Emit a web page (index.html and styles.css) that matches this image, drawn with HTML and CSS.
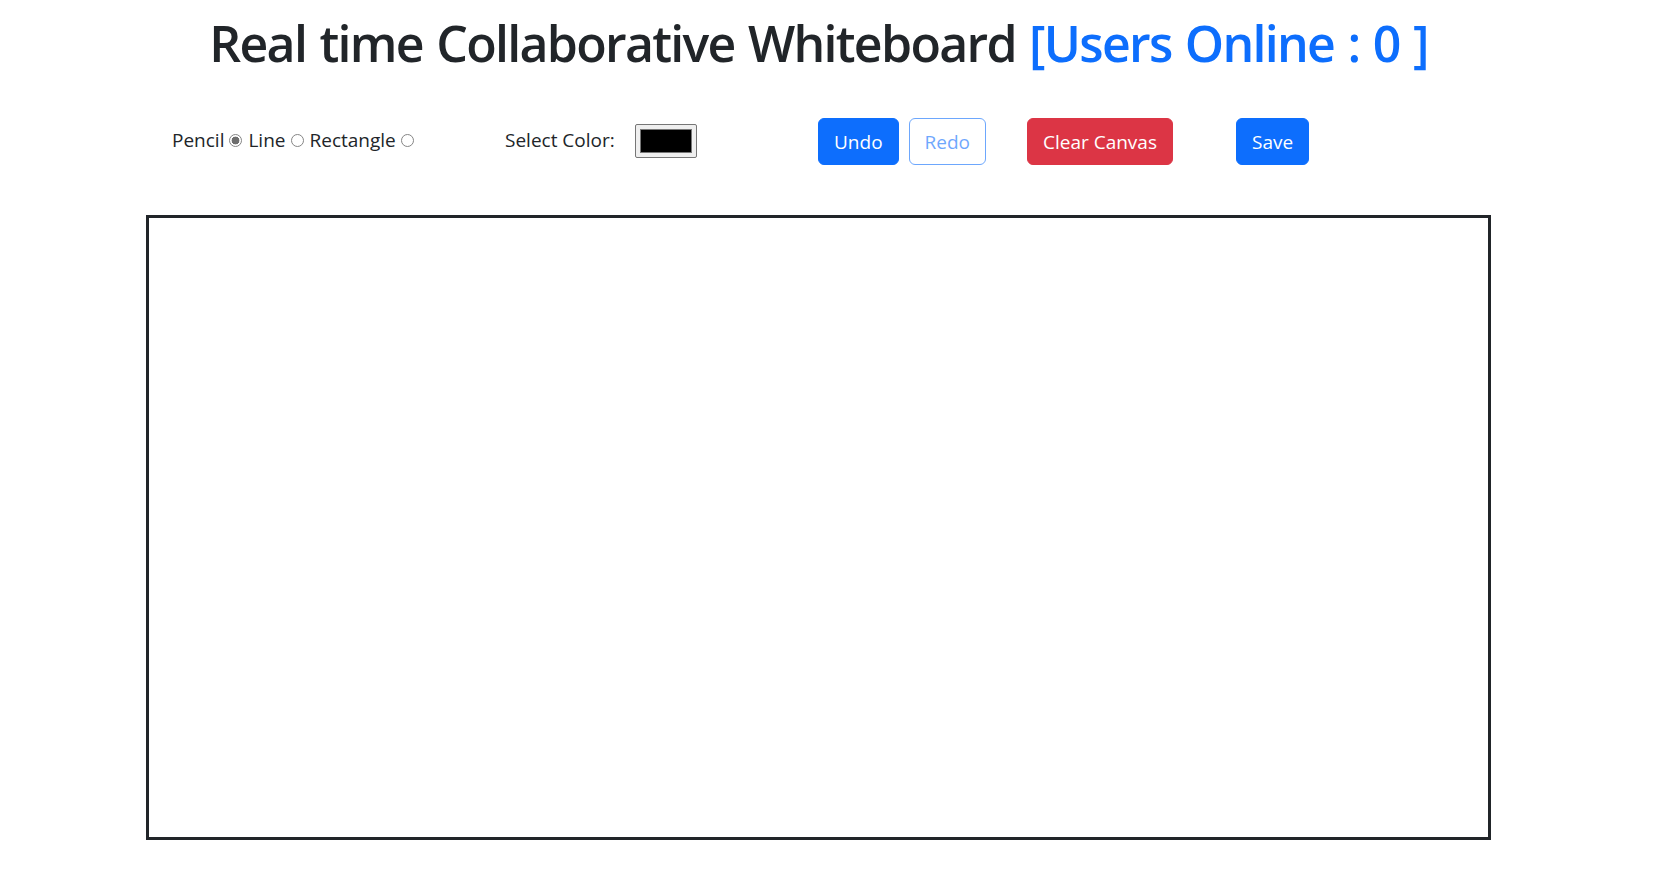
FILE: index.html
```html
<!DOCTYPE html>
<html lang="en">
<head>
<meta charset="utf-8">
<title>Real time Collaborative Whiteboard</title>
<link rel="stylesheet" href="styles.css">
</head>
<body>
<main class="app">
  <h1 class="title">Real time Collaborative Whiteboard <span class="online">[Users Online : 0 ]</span></h1>
  <div class="toolbar">
    <div class="tools">
      <label class="tool">Pencil <input type="radio" name="tool" checked></label>
      <label class="tool">Line <input type="radio" name="tool"></label>
      <label class="tool">Rectangle <input type="radio" name="tool"></label>
    </div>
    <div class="color-picker">
      <label class="color-label">Select Color:</label>
      <span class="swatch"><span class="swatch-fill"></span></span>
    </div>
    <div class="history">
      <button class="btn btn-primary">Undo</button>
      <button class="btn btn-outline">Redo</button>
    </div>
    <div class="cell">
      <button class="btn btn-danger">Clear Canvas</button>
    </div>
    <div class="cell">
      <button class="btn btn-primary">Save</button>
    </div>
  </div>
  <div class="board"></div>
</main>
</body>
</html>
```

FILE: styles.css
```css
* { box-sizing: border-box; }
html, body { margin: 0; padding: 0; background: #fff; }
body {
  font-family: "Open Sans", "Noto Sans", sans-serif;
  color: #212529;
  font-size: 19px;
}
.app {
  padding: 0 19px 0 0;
  display: flex;
  flex-direction: column;
  align-items: center;
}
.title {
  margin: 13px 0 0 0;
  font-size: 50px;
  font-weight: 600;
  line-height: 60px;
  letter-spacing: -1.7px;
  word-spacing: 2px;
  white-space: nowrap;
}
.online { color: #0d6efd; }
.toolbar {
  align-self: flex-start;
  margin: 44px 0 0 172px;
  display: grid;
  grid-template-columns: 333px 313px 209px 209px auto;
  align-items: center;
  height: 48px;
}
.tools { display: flex; align-items: center; gap: 6px; margin-top: -3px; }
.tool { display: flex; align-items: center; gap: 5px; }
.tool input {
  appearance: none;
  -webkit-appearance: none;
  margin: 1px 0 0 0;
  width: 13px;
  height: 13px;
  border: 1px solid #858585;
  border-radius: 50%;
  background: #fff;
}
.tool input:checked {
  background: radial-gradient(circle, #6e6e6e 0 3.6px, #fff 4.2px);
}
.color-picker { display: flex; align-items: center; }
.color-label { margin-right: 20px; margin-top: -3px; }
.swatch {
  width: 62px;
  height: 34px;
  border: 1px solid #767676;
  border-radius: 2px;
  background: #efefef;
  padding: 4px 4px;
  display: flex;
}
.swatch-fill { flex: 1; background: #000; border: 1px solid #777; }
.history { display: flex; gap: 10px; }
.cell { display: flex; }
.btn {
  font-family: inherit;
  font-size: 19px;
  line-height: 30px;
  padding: 8px 15px;
  border: 1px solid transparent;
  border-radius: 6px;
  height: 47px;
  cursor: pointer;
}
.btn-primary { background: #0d6efd; border-color: #0d6efd; color: #fff; }
.btn-outline { background: #fff; border-color: #0d6efd; color: #0d6efd; opacity: .6; }
.btn-danger { background: #dc3545; border-color: #dc3545; color: #fff; }
.board {
  align-self: flex-start;
  margin: 50px 0 0 146px;
  width: 1345px;
  height: 625px;
  border: 3px solid #212529;
  background: #fff;
}
```
